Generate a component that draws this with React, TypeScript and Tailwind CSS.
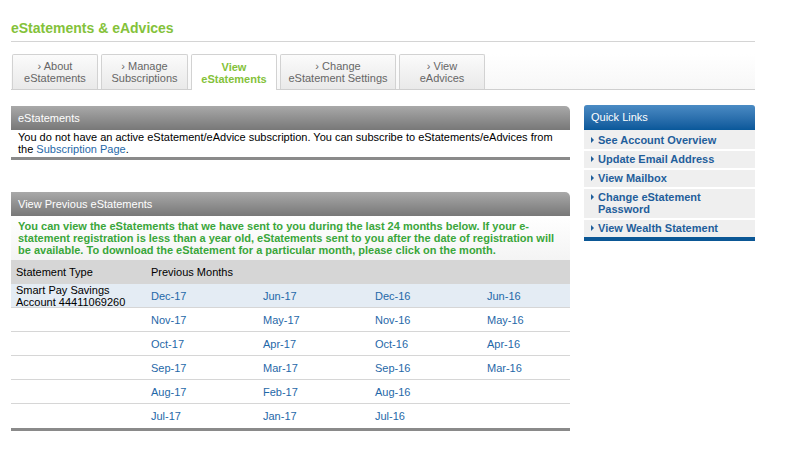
import React from "react";

const tabs = [
  { l1: "› About", l2: "eStatements", w: "w-[86px]", active: false },
  { l1: "› Manage", l2: "Subscriptions", w: "w-[87px]", active: false },
  { l1: "View", l2: "eStatements", w: "w-[86px]", active: true },
  { l1: "› Change", l2: "eStatement Settings", w: "w-[116px]", active: false },
  { l1: "› View", l2: "eAdvices", w: "w-[86px]", active: false },
];

const rows: string[][] = [
  ["Dec-17", "Jun-17", "Dec-16", "Jun-16"],
  ["Nov-17", "May-17", "Nov-16", "May-16"],
  ["Oct-17", "Apr-17", "Oct-16", "Apr-16"],
  ["Sep-17", "Mar-17", "Sep-16", "Mar-16"],
  ["Aug-17", "Feb-17", "Aug-16", ""],
  ["Jul-17", "Jan-17", "Jul-16", ""],
];

const links = [
  ["See Account Overview"],
  ["Update Email Address"],
  ["View Mailbox"],
  ["Change eStatement", "Password"],
  ["View Wealth Statement"],
];

function PanelHeader({ title }: { title: string }) {
  return (
    <div className="h-[24px] rounded-tr-[5px] bg-gradient-to-b from-[#a9a9a9] to-[#787878] pl-[7px] text-[11px] leading-[24px] text-white">
      {title}
    </div>
  );
}

export default function App() {
  return (
    <div className="min-h-[474px] w-[807px] bg-white pl-[11px] font-['Liberation_Sans',Arial,sans-serif] text-[11px] text-black">
      <div className="w-[744px]">
        <div className="pt-[20px] pb-[4px] text-[14px] font-bold leading-[17px] text-[#84c23a]">
          eStatements &amp; eAdvices
        </div>
        <div className="h-px bg-[#d4d4d4]" />
        <div className="mt-[12px] flex h-[36px] items-end gap-[3px] border-b border-[#cfcfcf] bg-gradient-to-b from-white to-[#f7f7f7] pl-px">
          {tabs.map((t, i) => (
            <div
              key={i}
              className={`${t.w} flex flex-col items-center justify-center rounded-t-[2px] border border-b-0 border-[#d2d2d2] text-center text-[11px] leading-[12px] ${
                t.active
                  ? "-mb-px h-[36px] bg-white font-bold text-[#84c23a]"
                  : "h-[35px] bg-gradient-to-b from-[#fbfbfb] to-[#e9e9e9] text-[#666]"
              }`}
            >
              <span>{t.l1}</span>
              <span>{t.l2}</span>
            </div>
          ))}
        </div>

        <div className="mt-[16px] flex items-start gap-[14px]">
          <div className="w-[559px]">
            <PanelHeader title="eStatements" />
            <div className="border-b-[3px] border-[#8a8a8a] pt-[1px] pb-[2px] pl-[7px] text-[11px] leading-[12px]">
              You do not have an active eStatement/eAdvice subscription. You can subscribe to eStatements/eAdvices from
              <br />
              the <span className="text-[#1f68a8]">Subscription Page</span>.
            </div>

            <div className="mt-[32px]">
              <PanelHeader title="View Previous eStatements" />
              <div className="bg-gradient-to-b from-white to-[#f4f4f4] pt-[4px] pb-[4px] pl-[7px] pr-[8px] text-[11px] font-bold leading-[12px] text-[#3aa63a]">
                You can view the eStatements that we have sent to you during the last 24 months below. If your e-statement registration is less than a year old, eStatements sent to you after the date of registration will be available. To download the eStatement for a particular month, please click on the month.
              </div>
              <div className="flex h-[24px] items-center bg-[#d6d6d6] text-[11px]">
                <div className="w-[140px] shrink-0 pl-[5px]">Statement Type</div>
                <div>Previous Months</div>
              </div>
              {rows.map((r, i) => (
                <div
                  key={i}
                  className={`flex h-[24px] items-center ${i === 0 ? "bg-[#e4ecf4]" : ""} ${
                    i < rows.length - 1 ? "border-b border-[#d6d6d6]" : ""
                  }`}
                >
                  <div className="w-[140px] shrink-0 pl-[5px] text-[11px] leading-[12px]">
                    {i === 0 ? (
                      <>
                        Smart Pay Savings
                        <br />
                        Account 44411069260
                      </>
                    ) : null}
                  </div>
                  {r.map((m, j) => (
                    <div
                      key={j}
                      className={`${j === 3 ? "flex-1" : "w-[112px] shrink-0"} pt-[1px] text-[11px] text-[#1f68a8]`}
                    >
                      {m}
                    </div>
                  ))}
                </div>
              ))}
              <div className="h-[3px] bg-[#8a8a8a]" />
            </div>
          </div>

          <div className="-mt-px w-[171px] rounded-t-[3px] border-b-[4px] border-[#0b5795] bg-[#efefef]">
            <div className="h-[25px] rounded-t-[3px] bg-gradient-to-b from-[#4a8bc4] to-[#08589a] pl-[7px] text-[11px] leading-[25px] text-white">
              Quick Links
            </div>
            {links.map((l, i) => (
              <div
                key={i}
                className={`flex items-start py-[2px] pl-[7px] text-[11px] font-bold leading-[13px] text-[#1f5e9b] ${
                  i === 0 ? "pt-[4px]" : "border-t-2 border-white"
                }`}
              >
                <span className="mr-[4px] mt-[3px] inline-block h-0 w-0 border-y-[3px] border-l-[3px] border-y-transparent border-l-[#1f5e9b]" />
                <span>
                  {l.map((s, k) => (
                    <div key={k} className={k > 0 ? "-mt-px" : ""}>
                      {s}
                    </div>
                  ))}
                </span>
              </div>
            ))}
          </div>
        </div>
      </div>
    </div>
  );
}
